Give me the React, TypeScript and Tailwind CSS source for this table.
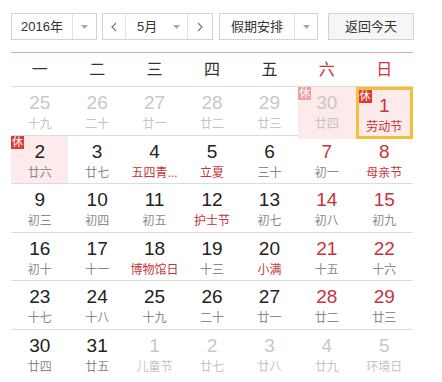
import React from 'react';

type Day = {
  n: number;
  sub: string;
  other?: boolean;
  red?: boolean;
  fest?: boolean;
  rest?: boolean;
  today?: boolean;
};

const weeks: Day[][] = [
  [
    { n: 25, sub: '十九', other: true },
    { n: 26, sub: '二十', other: true },
    { n: 27, sub: '廿一', other: true },
    { n: 28, sub: '廿二', other: true },
    { n: 29, sub: '廿三', other: true },
    { n: 30, sub: '廿四', other: true, rest: true },
    { n: 1, sub: '劳动节', red: true, fest: true, rest: true, today: true },
  ],
  [
    { n: 2, sub: '廿六', rest: true },
    { n: 3, sub: '廿七' },
    { n: 4, sub: '五四青...', fest: true },
    { n: 5, sub: '立夏', fest: true },
    { n: 6, sub: '三十' },
    { n: 7, sub: '初一', red: true },
    { n: 8, sub: '母亲节', red: true, fest: true },
  ],
  [
    { n: 9, sub: '初三' },
    { n: 10, sub: '初四' },
    { n: 11, sub: '初五' },
    { n: 12, sub: '护士节', fest: true },
    { n: 13, sub: '初七' },
    { n: 14, sub: '初八', red: true },
    { n: 15, sub: '初九', red: true },
  ],
  [
    { n: 16, sub: '初十' },
    { n: 17, sub: '十一' },
    { n: 18, sub: '博物馆日', fest: true },
    { n: 19, sub: '十三' },
    { n: 20, sub: '小满', fest: true },
    { n: 21, sub: '十五', red: true },
    { n: 22, sub: '十六', red: true },
  ],
  [
    { n: 23, sub: '十七' },
    { n: 24, sub: '十八' },
    { n: 25, sub: '十九' },
    { n: 26, sub: '二十' },
    { n: 27, sub: '廿一' },
    { n: 28, sub: '廿二', red: true },
    { n: 29, sub: '廿三', red: true },
  ],
  [
    { n: 30, sub: '廿四' },
    { n: 31, sub: '廿五' },
    { n: 1, sub: '儿童节', other: true },
    { n: 2, sub: '廿七', other: true },
    { n: 3, sub: '廿八', other: true },
    { n: 4, sub: '廿九', other: true },
    { n: 5, sub: '环境日', other: true },
  ],
];

const weekdays = ['一', '二', '三', '四', '五', '六', '日'];

function Caret() {
  return (
    <svg width="7" height="4" viewBox="0 0 7 4">
      <path d="M0 0h7L3.5 4z" fill="#a8a8a8" />
    </svg>
  );
}

function Chevron({ dir }: { dir: 'left' | 'right' }) {
  return (
    <svg width="6" height="10" viewBox="0 0 6 10">
      <path
        d={dir === 'left' ? 'M5 1L1 5l4 4' : 'M1 1l4 4-4 4'}
        fill="none"
        stroke="#777"
        strokeWidth="1.2"
      />
    </svg>
  );
}

function DayCell({ d }: { d: Day }) {
  const numColor = d.other ? 'text-[#c8c8c8]' : d.red ? 'text-[#c8333b]' : 'text-[#222]';
  const subColor = d.other
    ? 'text-[#c4c4c4]'
    : d.fest
      ? 'text-[#c8333b]'
      : 'text-[#8a8a8a]';
  return (
    <div
      className={`relative flex h-full flex-col items-center pt-[5px] ${
        d.rest ? 'bg-[#fdeaea]' : ''
      } ${d.today ? 'border-[3px] border-[#f2bf36] pt-[2px]' : ''}`}
    >
      {d.rest && (
        <span
          className={`absolute left-0 top-0 flex h-[13px] w-[13px] items-center justify-center text-[11px] leading-none text-white ${
            d.other ? 'bg-[#f0a2a2]' : 'bg-[#dd3b34]'
          }`}
        >
          休
        </span>
      )}
      <span className={`text-[19px] leading-[22px] ${numColor}`}>{d.n}</span>
      <span className={`mt-px whitespace-nowrap text-[12px] leading-[18px] ${subColor}`}>{d.sub}</span>
    </div>
  );
}

export default function App() {
  return (
    <div
      className="h-[382px] w-[442px] bg-white pl-[11px] pt-[13px]"
      style={{ fontFamily: '"Liberation Sans", "Noto Sans CJK SC", sans-serif' }}
    >
      <div className="flex h-[27px] items-stretch text-[13px] text-[#333]">
        <div className="flex w-[86px] border border-[#d3d3d3] bg-white">
          <div className="flex w-[61px] items-center justify-center border-r border-[#e2e2e2]">2016年</div>
          <div className="flex flex-1 items-center justify-center">
            <Caret />
          </div>
        </div>
        <div className="ml-[5px] flex w-[111px] border border-[#d3d3d3] bg-white">
          <div className="flex w-[23px] items-center justify-center border-r border-[#e2e2e2]">
            <Chevron dir="left" />
          </div>
          <div className="flex w-[62px] items-center border-r border-[#e2e2e2] pl-[11px]">
            <span>5月</span>
            <span className="ml-[16px] flex">
              <Caret />
            </span>
          </div>
          <div className="flex flex-1 items-center justify-center">
            <Chevron dir="right" />
          </div>
        </div>
        <div className="ml-[6px] flex w-[99px] border border-[#d3d3d3] bg-white">
          <div className="flex w-[75px] items-center justify-center border-r border-[#e2e2e2]">假期安排</div>
          <div className="flex flex-1 items-center justify-center">
            <Caret />
          </div>
        </div>
        <div className="ml-[10px] flex w-[86px] items-center justify-center border border-[#d3d3d3] bg-[#f6f6f6]">
          返回今天
        </div>
      </div>

      <div className="mt-[12px] w-[402px]">
        <div className="grid h-[35px] grid-cols-7 border-y border-t-[#d6a9a9] border-b-[#dcdcdc]">
          {weekdays.map((w, i) => (
            <div
              key={w}
              className={`flex items-center justify-center text-[16px] ${
                i >= 5 ? 'text-[#c8333b]' : 'text-[#333]'
              }`}
            >
              {w}
            </div>
          ))}
        </div>
        {weeks.map((week, wi) => (
          <div
            key={wi}
            className={`grid h-[48.5px] grid-cols-7 ${wi < weeks.length - 1 ? 'border-b border-[#dcdcdc]' : ''}`}
          >
            {week.map((d, di) => (
              <DayCell key={di} d={d} />
            ))}
          </div>
        ))}
      </div>
    </div>
  );
}
